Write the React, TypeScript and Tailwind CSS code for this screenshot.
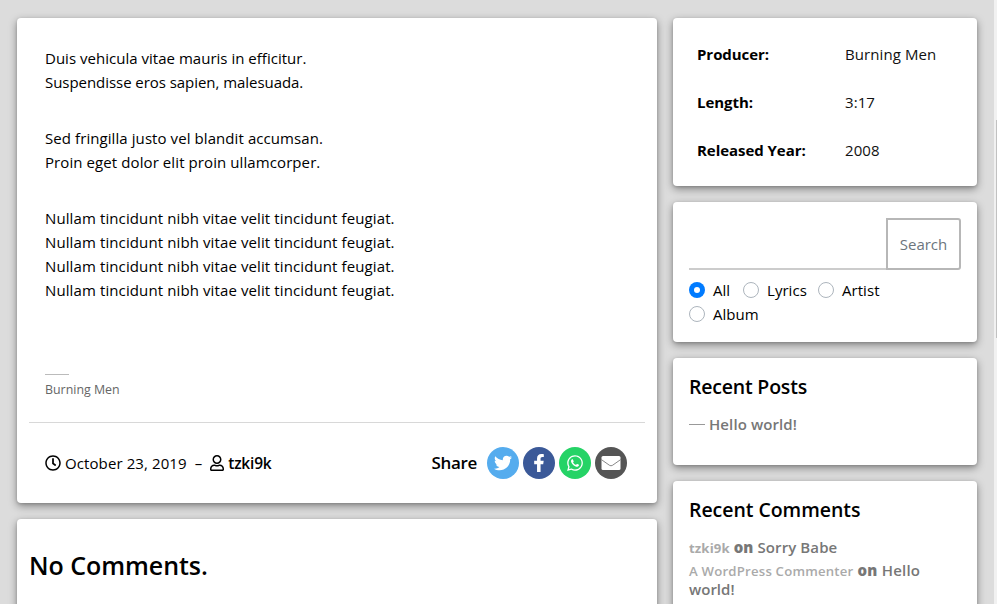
import { FaTwitter, FaFacebookF, FaWhatsapp, FaRegClock, FaRegUser } from "react-icons/fa";
import type { ReactNode } from "react";

const cardClass =
  "bg-white rounded-[4px] shadow-[0_3px_8px_rgba(0,0,0,0.4),0_1px_3px_rgba(0,0,0,0.15)]";

function Card({ className, children }: { className: string; children: ReactNode }) {
  return <section className={`${cardClass} ${className}`}>{children}</section>;
}

const verses = [
  [
    { text: "Duis vehicula vitae mauris in efficitur.", spacing: "tracking-[0.02px]" },
    { text: "Suspendisse eros sapien, malesuada.", spacing: "tracking-[-0.05px]" },
  ],
  [
    { text: "Sed fringilla justo vel blandit accumsan.", spacing: "tracking-[0.08px]" },
    { text: "Proin eget dolor elit proin ullamcorper.", spacing: "tracking-[0.09px]" },
  ],
  [
    { text: "Nullam tincidunt nibh vitae velit tincidunt feugiat.", spacing: "tracking-[0.11px]" },
    { text: "Nullam tincidunt nibh vitae velit tincidunt feugiat.", spacing: "tracking-[0.11px]" },
    { text: "Nullam tincidunt nibh vitae velit tincidunt feugiat.", spacing: "tracking-[0.11px]" },
    { text: "Nullam tincidunt nibh vitae velit tincidunt feugiat.", spacing: "tracking-[0.11px]" },
  ],
];

const details = [
  ["Producer:", "Burning Men"],
  ["Length:", "3:17"],
  ["Released Year:", "2008"],
];

function Radio({ label, checked, className }: { label: string; checked?: boolean; className: string }) {
  return (
    <label className={`flex h-6 items-center gap-2 ${className}`}>
      <span
        className={
          checked
            ? "flex size-4 items-center justify-center rounded-full bg-[#007bff]"
            : "size-4 rounded-full border border-[#adb5bd] bg-white"
        }
      >
        {checked && <span className="size-1.5 rounded-full bg-white" />}
      </span>
      <span className="tracking-[0.05px]">{label}</span>
    </label>
  );
}

function Envelope() {
  return (
    <svg width="20" height="14" viewBox="0 0 20 14">
      <rect x="0.5" width="19" height="14" rx="1.5" fill="#fff" />
      <path d="M0.5 3.7 L8.5 9.3 Q10 10.3 11.5 9.3 L19.5 3.7" fill="none" stroke="#555" strokeWidth="0.7" />
    </svg>
  );
}

export default function App() {
  return (
    <div className="flex h-[604px] w-[997px] overflow-hidden bg-[#dcdcdc] font-['Open_Sans','Noto_Sans',sans-serif] text-[15px] leading-6 text-black">
      <main className="ml-[17px] mt-[18px] flex w-[640px] flex-col gap-4">
        <Card className="h-[485px] shrink-0 px-3 pt-[28px]">
          <div className="flex h-[328px] flex-col gap-8 pl-4">
            {verses.map((lines, i) => (
              <p key={i}>
                {lines.map((line, j) => (
                  <span key={j} className={`block whitespace-nowrap ${line.spacing}`}>{line.text}</span>
                ))}
              </p>
            ))}
          </div>
          <div className="ml-4 h-12">
            <div className="h-px w-6 bg-[#bbb]" />
            <p className="mt-[3px] text-[12.4px] text-[#666]">Burning Men</p>
          </div>
          <footer className="flex h-[81px] items-center border-t border-[#d8d8d8] pl-4 pr-[18px]">
            <FaRegClock size={16} />
            <span className="ml-1 tracking-[0.1px]">October 23, 2019</span>
            <span className="ml-2">–</span>
            <FaRegUser size={16} className="ml-[7px]" />
            <span className="ml-[3px] text-[15.5px] font-semibold tracking-[-0.2px]">tzki9k</span>
            <span className="ml-auto text-[17px] font-semibold tracking-[-0.35px]">Share</span>
            <div className="ml-2.5 flex gap-1 text-white">
              <span className="flex size-8 items-center justify-center rounded-full bg-[#55acee]"><FaTwitter size={18} /></span>
              <span className="flex size-8 items-center justify-center rounded-full bg-[#3b5998]"><FaFacebookF size={18} /></span>
              <span className="flex size-8 items-center justify-center rounded-full bg-[#25d366]"><FaWhatsapp size={18} /></span>
              <span className="flex size-8 items-center justify-center rounded-full bg-[#555]"><Envelope /></span>
            </div>
          </footer>
        </Card>
        <Card className="h-[120px] shrink-0 px-3 pt-[28px]">
          <h2 className="text-[25px] font-semibold leading-9 tracking-[-0.05px]">No Comments.</h2>
        </Card>
      </main>

      <aside className="ml-4 mt-[18px] flex w-[304px] flex-col gap-4">
        <Card className="flex h-[168px] shrink-0 flex-col gap-6 pl-6 pt-[24px]">
          {details.map(([name, value]) => (
            <div key={name} className="flex">
              <strong className="w-[148px] font-bold tracking-[-0.05px]">{name}</strong>
              <span className="tracking-[0.08px] text-[#111]">{value}</span>
            </div>
          ))}
        </Card>
        <Card className="h-[140px] shrink-0 p-4">
          <div className="flex h-[52px] w-[272px]">
            <div className="grow border-b-2 border-[#ccc]" />
            <button className="w-[75px] rounded-r-[3px] border-2 border-[#b7b7b7] text-[#6c757d]">Search</button>
          </div>
          <div className="mt-2 flex flex-wrap">
            <Radio label="All" checked className="w-[54px]" />
            <Radio label="Lyrics" className="w-[75px]" />
            <Radio label="Artist" className="w-[80px]" />
            <Radio label="Album" className="w-[90px]" />
          </div>
        </Card>
        <Card className="h-[107px] shrink-0 p-4">
          <h3 className="pt-px text-[19.5px] font-semibold leading-6 tracking-[-0.2px]">Recent Posts</h3>
          <p className="mt-[13px] flex items-center font-semibold tracking-[0.1px] text-[#777]">
            <span className="mr-1 h-px w-4 bg-[#999]" />Hello world!
          </p>
        </Card>
        <Card className="h-[160px] shrink-0 p-4">
          <h3 className="pt-px text-[19.5px] font-semibold leading-6 tracking-[-0.05px]">Recent Comments</h3>
          <div className="mt-4 font-semibold leading-[19px] text-[#777]">
            <p className="mb-[3px] whitespace-nowrap tracking-[0.1px]">
              <span className="text-[13.2px] font-bold text-[#aaa]">tzki9k</span> <b>on</b> Sorry Babe
            </p>
            <p className="whitespace-nowrap tracking-[0.2px]">
              <span className="text-[13.2px] font-semibold text-[#aaa]">A WordPress Commenter</span> <b>on</b> Hello
            </p>
            <p className="-mt-px">world!</p>
          </div>
        </Card>
      </aside>
      <div className="ml-[17px] flex w-[3px] justify-end bg-[#f1f1f1]">
        <div className="mt-[120px] h-[218px] w-px bg-[#c1c1c1]" />
      </div>
    </div>
  );
}
